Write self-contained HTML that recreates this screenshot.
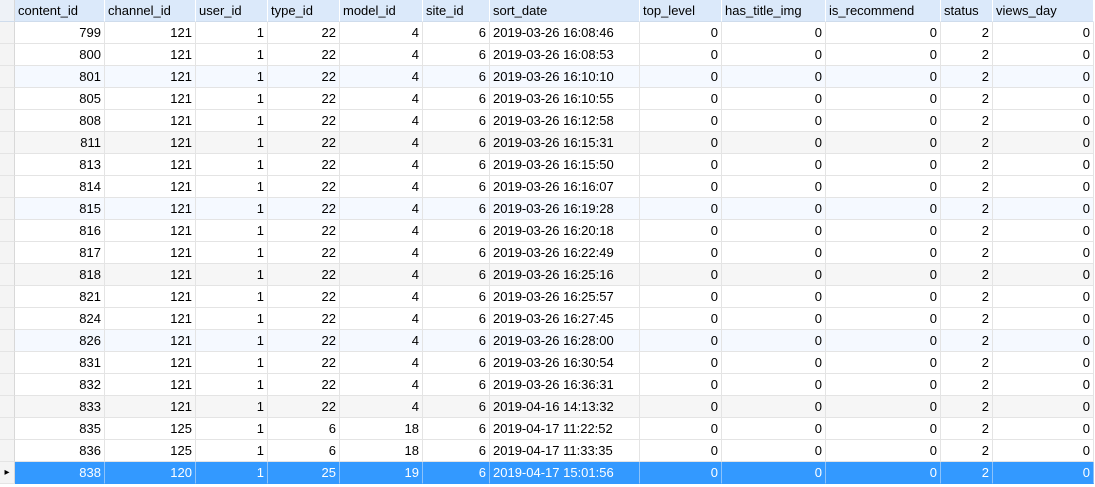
<!DOCTYPE html><html><head><style>
body{margin:0;background:#fff;width:1095px;height:487px;overflow:hidden;font-family:"Liberation Sans","Noto Sans CJK SC",sans-serif;font-size:13px;color:#000}
.r{display:flex;height:22px}
.r div{box-sizing:border-box;border-right:1px solid #e4e4e4;border-bottom:1px solid #e4e4e4;height:22px;line-height:21px;text-align:right;padding-right:3px;white-space:nowrap;overflow:hidden}
.r div:nth-child(1){width:15px;background:#f4f4f4;border-right:1px solid #d8d8d8}
.r div:nth-child(2){width:90px}.r div:nth-child(3){width:91px}.r div:nth-child(4){width:72px}.r div:nth-child(5){width:72px}.r div:nth-child(6){width:83px}.r div:nth-child(7){width:67px}.r div:nth-child(8){width:150px;text-align:left;padding-left:3px}.r div:nth-child(9){width:82px}.r div:nth-child(10){width:104px}.r div:nth-child(11){width:115px}.r div:nth-child(12){width:52px}.r div:nth-child(13){width:101px}
.h div{background:#dbe9fa;text-align:left;padding-left:3px;border-right:1px solid #fff;border-bottom:1px solid #cfdcec}
.h div:nth-child(1){background:#eef2f7}
.b div:not(:first-child){background:#f5f9ff}
.g div:not(:first-child){background:#f6f6f6}
.s div:not(:first-child){background:#3399ff;color:#fff;border-right:1px solid #8cc2fa;border-bottom:1px solid #3399ff}
.s div:nth-child(1){font-size:10px;text-align:center;padding:0}
</style></head><body>
<div class="r h"><div></div><div>content_id</div><div>channel_id</div><div>user_id</div><div>type_id</div><div>model_id</div><div>site_id</div><div>sort_date</div><div>top_level</div><div>has_title_img</div><div>is_recommend</div><div>status</div><div>views_day</div></div>
<div class="r"><div></div><div>799</div><div>121</div><div>1</div><div>22</div><div>4</div><div>6</div><div>2019-03-26 16:08:46</div><div>0</div><div>0</div><div>0</div><div>2</div><div>0</div></div>
<div class="r"><div></div><div>800</div><div>121</div><div>1</div><div>22</div><div>4</div><div>6</div><div>2019-03-26 16:08:53</div><div>0</div><div>0</div><div>0</div><div>2</div><div>0</div></div>
<div class="r b"><div></div><div>801</div><div>121</div><div>1</div><div>22</div><div>4</div><div>6</div><div>2019-03-26 16:10:10</div><div>0</div><div>0</div><div>0</div><div>2</div><div>0</div></div>
<div class="r"><div></div><div>805</div><div>121</div><div>1</div><div>22</div><div>4</div><div>6</div><div>2019-03-26 16:10:55</div><div>0</div><div>0</div><div>0</div><div>2</div><div>0</div></div>
<div class="r"><div></div><div>808</div><div>121</div><div>1</div><div>22</div><div>4</div><div>6</div><div>2019-03-26 16:12:58</div><div>0</div><div>0</div><div>0</div><div>2</div><div>0</div></div>
<div class="r g"><div></div><div>811</div><div>121</div><div>1</div><div>22</div><div>4</div><div>6</div><div>2019-03-26 16:15:31</div><div>0</div><div>0</div><div>0</div><div>2</div><div>0</div></div>
<div class="r"><div></div><div>813</div><div>121</div><div>1</div><div>22</div><div>4</div><div>6</div><div>2019-03-26 16:15:50</div><div>0</div><div>0</div><div>0</div><div>2</div><div>0</div></div>
<div class="r"><div></div><div>814</div><div>121</div><div>1</div><div>22</div><div>4</div><div>6</div><div>2019-03-26 16:16:07</div><div>0</div><div>0</div><div>0</div><div>2</div><div>0</div></div>
<div class="r b"><div></div><div>815</div><div>121</div><div>1</div><div>22</div><div>4</div><div>6</div><div>2019-03-26 16:19:28</div><div>0</div><div>0</div><div>0</div><div>2</div><div>0</div></div>
<div class="r"><div></div><div>816</div><div>121</div><div>1</div><div>22</div><div>4</div><div>6</div><div>2019-03-26 16:20:18</div><div>0</div><div>0</div><div>0</div><div>2</div><div>0</div></div>
<div class="r"><div></div><div>817</div><div>121</div><div>1</div><div>22</div><div>4</div><div>6</div><div>2019-03-26 16:22:49</div><div>0</div><div>0</div><div>0</div><div>2</div><div>0</div></div>
<div class="r g"><div></div><div>818</div><div>121</div><div>1</div><div>22</div><div>4</div><div>6</div><div>2019-03-26 16:25:16</div><div>0</div><div>0</div><div>0</div><div>2</div><div>0</div></div>
<div class="r"><div></div><div>821</div><div>121</div><div>1</div><div>22</div><div>4</div><div>6</div><div>2019-03-26 16:25:57</div><div>0</div><div>0</div><div>0</div><div>2</div><div>0</div></div>
<div class="r"><div></div><div>824</div><div>121</div><div>1</div><div>22</div><div>4</div><div>6</div><div>2019-03-26 16:27:45</div><div>0</div><div>0</div><div>0</div><div>2</div><div>0</div></div>
<div class="r b"><div></div><div>826</div><div>121</div><div>1</div><div>22</div><div>4</div><div>6</div><div>2019-03-26 16:28:00</div><div>0</div><div>0</div><div>0</div><div>2</div><div>0</div></div>
<div class="r"><div></div><div>831</div><div>121</div><div>1</div><div>22</div><div>4</div><div>6</div><div>2019-03-26 16:30:54</div><div>0</div><div>0</div><div>0</div><div>2</div><div>0</div></div>
<div class="r"><div></div><div>832</div><div>121</div><div>1</div><div>22</div><div>4</div><div>6</div><div>2019-03-26 16:36:31</div><div>0</div><div>0</div><div>0</div><div>2</div><div>0</div></div>
<div class="r g"><div></div><div>833</div><div>121</div><div>1</div><div>22</div><div>4</div><div>6</div><div>2019-04-16 14:13:32</div><div>0</div><div>0</div><div>0</div><div>2</div><div>0</div></div>
<div class="r"><div></div><div>835</div><div>125</div><div>1</div><div>6</div><div>18</div><div>6</div><div>2019-04-17 11:22:52</div><div>0</div><div>0</div><div>0</div><div>2</div><div>0</div></div>
<div class="r"><div></div><div>836</div><div>125</div><div>1</div><div>6</div><div>18</div><div>6</div><div>2019-04-17 11:33:35</div><div>0</div><div>0</div><div>0</div><div>2</div><div>0</div></div>
<div class="r s"><div>&#9656;</div><div>838</div><div>120</div><div>1</div><div>25</div><div>19</div><div>6</div><div>2019-04-17 15:01:56</div><div>0</div><div>0</div><div>0</div><div>2</div><div>0</div></div>
</body></html>
